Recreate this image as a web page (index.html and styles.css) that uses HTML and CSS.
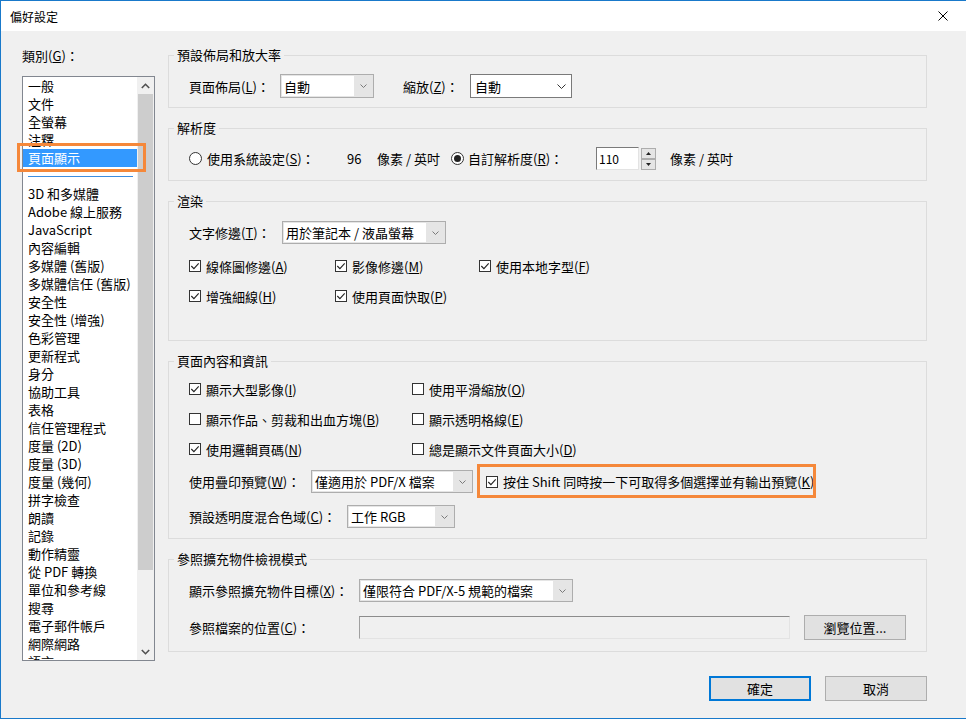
FILE: index.html
```html
<!DOCTYPE html>
<html>
  <head>
    <meta charset="utf-8">
    <title>偏好設定</title>
    <link rel="stylesheet" href="styles.css">
  </head>
  <body>
    <div class="window">
      <header class="titlebar">
        <span class="titlebar-text">偏好設定</span>
        <svg class="close-icon" width="10" height="10" viewBox="0 0 10 10">
          <path d="M0.5 0.5 L9.5 9.5 M9.5 0.5 L0.5 9.5" stroke="#000" stroke-width="1" fill="none"/>
        </svg>
      </header>

      <div class="dialog">
        <!-- category list -->
        <aside class="sidebar">
          <div class="cat-label">類別(<u>G</u>)：</div>
          <div class="listbox">
            <ul class="cat-list">
              <li>一般</li>
              <li>文件</li>
              <li>全螢幕</li>
              <li>注釋</li>
              <li class="selected">頁面顯示</li>
              <li class="separator"></li>
              <li>3D 和多媒體</li>
              <li>Adobe 線上服務</li>
              <li>JavaScript</li>
              <li>內容編輯</li>
              <li>多媒體 (舊版)</li>
              <li>多媒體信任 (舊版)</li>
              <li>安全性</li>
              <li>安全性 (增強)</li>
              <li>色彩管理</li>
              <li>更新程式</li>
              <li>身分</li>
              <li>協助工具</li>
              <li>表格</li>
              <li>信任管理程式</li>
              <li>度量 (2D)</li>
              <li>度量 (3D)</li>
              <li>度量 (幾何)</li>
              <li>拼字檢查</li>
              <li>朗讀</li>
              <li>記錄</li>
              <li>動作精靈</li>
              <li>從 PDF 轉換</li>
              <li>單位和參考線</li>
              <li>搜尋</li>
              <li>電子郵件帳戶</li>
              <li>網際網路</li>
              <li>語言</li>
            </ul>
            <div class="scrollbar">
              <div class="scroll-btn">
                <svg width="9" height="6" viewBox="0 0 9 6"><polyline points="0.8,5 4.5,1.3 8.2,5" fill="none" stroke="#505050" stroke-width="1.6"/></svg>
              </div>
              <div class="scroll-thumb"></div>
              <div class="scroll-track"></div>
              <div class="scroll-btn">
                <svg width="9" height="6" viewBox="0 0 9 6"><polyline points="0.8,1 4.5,4.7 8.2,1" fill="none" stroke="#505050" stroke-width="1.6"/></svg>
              </div>
            </div>
          </div>
          <div class="callout callout-list"></div>
        </aside>

        <main class="panel">
          <fieldset class="group">
            <legend>預設佈局和放大率</legend>
            <div class="group-body group-layout">
              <div class="row">
                <span class="field-label lbl-layout">頁面佈局(<u>L</u>)：</span>
                <div class="combo combo-layout">
                  <span class="combo-text">自動</span>
                  <span class="combo-arrow"><svg width="7" height="4" viewBox="0 0 7 4"><polyline points="0.5,0.5 3.5,3.5 6.5,0.5" fill="none" stroke="#7a7a7a"/></svg></span>
                </div>
                <span class="field-label lbl-zoom">縮放(<u>Z</u>)：</span>
                <div class="combo combo-edit combo-zoom">
                  <span class="combo-text">自動</span>
                  <span class="combo-arrow"><svg width="9" height="5" viewBox="0 0 9 5"><polyline points="0.5,0.5 4.5,4.5 8.5,0.5" fill="none" stroke="#333"/></svg></span>
                </div>
              </div>
            </div>
          </fieldset>

          <fieldset class="group">
            <legend>解析度</legend>
            <div class="group-body">
              <div class="row">
                <span class="radio"></span>
                <span class="field-label lbl-system">使用系統設定(<u>S</u>)：</span>
                <span class="dpi-value">96</span>
                <span class="unit">像素 / 英吋</span>
                <span class="radio on"></span>
                <span class="field-label lbl-custom">自訂解析度(<u>R</u>)：</span>
                <div class="spin-input">110</div>
                <div class="spinner">
                  <span class="spin-btn"><svg width="5" height="3" viewBox="0 0 5 3"><polygon points="0,3 2.5,0 5,3" fill="#222"/></svg></span>
                  <span class="spin-btn"><svg width="5" height="3" viewBox="0 0 5 3"><polygon points="0,0 2.5,3 5,0" fill="#222"/></svg></span>
                </div>
                <span class="unit-after">像素 / 英吋</span>
              </div>
            </div>
          </fieldset>

          <fieldset class="group">
            <legend>渲染</legend>
            <div class="group-body group-render">
              <div class="row">
                <span class="field-label lbl-smooth">文字修邊(<u>T</u>)：</span>
                <div class="combo combo-smooth">
                  <span class="combo-text">用於筆記本 / 液晶螢幕</span>
                  <span class="combo-arrow"><svg width="7" height="4" viewBox="0 0 7 4"><polyline points="0.5,0.5 3.5,3.5 6.5,0.5" fill="none" stroke="#7a7a7a"/></svg></span>
                </div>
              </div>
              <div class="check-grid render-grid">
                <span class="check"><span class="box"><svg width="10" height="10" viewBox="0 0 10 10"><polyline points="1.3,5 3.9,7.6 8.7,2.4" fill="none" stroke="#222" stroke-width="1.1"/></svg></span><span>線條圖修邊(<u>A</u>)</span></span>
                <span class="check"><span class="box"><svg width="10" height="10" viewBox="0 0 10 10"><polyline points="1.3,5 3.9,7.6 8.7,2.4" fill="none" stroke="#222" stroke-width="1.1"/></svg></span><span>影像修邊(<u>M</u>)</span></span>
                <span class="check"><span class="box"><svg width="10" height="10" viewBox="0 0 10 10"><polyline points="1.3,5 3.9,7.6 8.7,2.4" fill="none" stroke="#222" stroke-width="1.1"/></svg></span><span>使用本地字型(<u>F</u>)</span></span>
                <span class="check"><span class="box"><svg width="10" height="10" viewBox="0 0 10 10"><polyline points="1.3,5 3.9,7.6 8.7,2.4" fill="none" stroke="#222" stroke-width="1.1"/></svg></span><span>增強細線(<u>H</u>)</span></span>
                <span class="check"><span class="box"><svg width="10" height="10" viewBox="0 0 10 10"><polyline points="1.3,5 3.9,7.6 8.7,2.4" fill="none" stroke="#222" stroke-width="1.1"/></svg></span><span>使用頁面快取(<u>P</u>)</span></span>
              </div>
            </div>
          </fieldset>

          <fieldset class="group">
            <legend>頁面內容和資訊</legend>
            <div class="group-body">
              <div class="check-grid content-grid">
                <span class="check"><span class="box"><svg width="10" height="10" viewBox="0 0 10 10"><polyline points="1.3,5 3.9,7.6 8.7,2.4" fill="none" stroke="#222" stroke-width="1.1"/></svg></span><span>顯示大型影像(<u>I</u>)</span></span>
                <span class="check"><span class="box"></span><span>使用平滑縮放(<u>O</u>)</span></span>
                <span class="check"><span class="box"></span><span>顯示作品、剪裁和出血方塊(<u>B</u>)</span></span>
                <span class="check"><span class="box"></span><span>顯示透明格線(<u>E</u>)</span></span>
                <span class="check"><span class="box"><svg width="10" height="10" viewBox="0 0 10 10"><polyline points="1.3,5 3.9,7.6 8.7,2.4" fill="none" stroke="#222" stroke-width="1.1"/></svg></span><span>使用邏輯頁碼(<u>N</u>)</span></span>
                <span class="check"><span class="box"></span><span>總是顯示文件頁面大小(<u>D</u>)</span></span>
              </div>
              <div class="row">
                <span class="field-label lbl-overprint">使用疊印預覽(<u>W</u>)：</span>
                <div class="combo combo-overprint">
                  <span class="combo-text">僅適用於 PDF/X 檔案</span>
                  <span class="combo-arrow"><svg width="7" height="4" viewBox="0 0 7 4"><polyline points="0.5,0.5 3.5,3.5 6.5,0.5" fill="none" stroke="#7a7a7a"/></svg></span>
                </div>
                <span class="check check-callout"><span class="box"><svg width="10" height="10" viewBox="0 0 10 10"><polyline points="1.3,5 3.9,7.6 8.7,2.4" fill="none" stroke="#222" stroke-width="1.1"/></svg></span><span>按住 Shift 同時按一下可取得多個選擇並有輸出預覽(<u>K</u>)</span></span>
              </div>
              <div class="row">
                <span class="field-label lbl-blend">預設透明度混合色域(<u>C</u>)：</span>
                <div class="combo combo-blend">
                  <span class="combo-text">工作 RGB</span>
                  <span class="combo-arrow"><svg width="7" height="4" viewBox="0 0 7 4"><polyline points="0.5,0.5 3.5,3.5 6.5,0.5" fill="none" stroke="#7a7a7a"/></svg></span>
                </div>
              </div>
            </div>
          </fieldset>

          <fieldset class="group">
            <legend>參照擴充物件檢視模式</legend>
            <div class="group-body group-ref">
              <div class="row">
                <span class="field-label lbl-ref">顯示參照擴充物件目標(<u>X</u>)：</span>
                <div class="combo combo-ref">
                  <span class="combo-text">僅限符合 PDF/X-5 規範的檔案</span>
                  <span class="combo-arrow"><svg width="7" height="4" viewBox="0 0 7 4"><polyline points="0.5,0.5 3.5,3.5 6.5,0.5" fill="none" stroke="#7a7a7a"/></svg></span>
                </div>
              </div>
              <div class="row">
                <span class="field-label lbl-ref">參照檔案的位置(<u>C</u>)：</span>
                <div class="path-input"></div>
                <button class="btn btn-browse">瀏覽位置...</button>
              </div>
            </div>
          </fieldset>

          <div class="actions">
            <button class="btn btn-default">確定</button>
            <button class="btn">取消</button>
          </div>
        </main>
      </div>
    </div>
  </body>
</html>
```

FILE: styles.css
```css
body {
  margin: 0;
  background-color: #fff;
  font-family: "Noto Sans CJK TC", "Noto Sans", sans-serif;
  font-size: 13px;
  color: #000;
}

.window {
  width: 966px;
  height: 719px;
  box-sizing: border-box;
  border: 1px solid #1979ca;
  border-right: 0;
  background-color: #f0f0f0;
  display: flex;
  flex-direction: column;
}

.titlebar {
  height: 30px;
  flex: none;
  background-color: #fff;
  display: flex;
  align-items: center;
  justify-content: space-between;
  padding: 0 18px 0 9px;

  .titlebar-text {
    font-size: 12px;
  }
}

.dialog {
  flex: 1;
  display: flex;
  padding: 16px 0 0 21px;
}

/* left column */
.sidebar {
  width: 133px;
  flex: none;
  position: relative;

  .cat-label {
    line-height: 18px;
  }

  .listbox {
    margin-top: 11px;
    height: 585px;
    box-sizing: border-box;
    border: 1px solid #828790;
    background-color: #fff;
    display: flex;
    overflow: hidden;
  }

  .cat-list {
    flex: 1;
    margin: 0;
    padding: 0;
    list-style: none;

    li {
      height: 18px;
      line-height: 18px;
      padding-left: 5px;
      white-space: nowrap;
    }

    .selected {
      background-color: #3399ff;
      color: #fff;
    }

    .separator {
      display: flex;
      align-items: center;
      padding: 0 4px 0 5px;
    }

    .separator::before {
      content: "";
      flex: 1;
      height: 1px;
      background-color: #3d8ee0;
    }
  }

  .scrollbar {
    width: 17px;
    flex: none;
    display: flex;
    flex-direction: column;
    background-color: #f0f0f0;

    .scroll-btn {
      height: 17px;
      flex: none;
      display: flex;
      align-items: center;
      justify-content: center;
    }

    .scroll-thumb {
      height: 476px;
      flex: none;
      margin: 0 1px;
      background-color: #cdcdcd;
    }

    .scroll-track {
      flex: 1;
    }
  }
}

.callout {
  position: absolute;
  box-sizing: border-box;
  border: 3px solid #f5883a;
  pointer-events: none;
}

.callout-list {
  left: -5px;
  top: 96px;
  width: 129px;
  height: 29px;
}

/* right column */
.panel {
  width: 759px;
  margin-left: 13px;
  display: flex;
  flex-direction: column;
  gap: 12px;
}

.group {
  margin: 0;
  padding: 0;
  border: 1px solid #dcdcdc;
  min-width: 0;

  legend {
    margin-left: 5px;
    padding: 0 3px;
    line-height: 16px;
  }
}

.group-body {
  display: flex;
  flex-direction: column;
  gap: 12px;
  padding: 11px 0 10px 20px;
}

.group-layout {
  padding-bottom: 9px;

  .row {
    height: 24px;
  }
}

.group-render {
  gap: 13px;
  padding-top: 12px;
  padding-bottom: 35px;
}

.group-ref {
  gap: 14px;
  padding-top: 12px;
  padding-bottom: 12px;
}

.row {
  display: flex;
  align-items: center;
  height: 23px;
}

.field-label {
  flex: none;
  white-space: nowrap;
}

.lbl-layout { width: 91px; }
.lbl-zoom { width: 67px; margin-left: 29px; }
.lbl-system { width: 140px; margin-left: 5px; }
.lbl-custom { width: 128px; margin-left: 4px; }
.lbl-smooth { width: 93px; }
.lbl-overprint { width: 122px; }
.lbl-blend { width: 158px; }
.lbl-ref { width: 170px; }

.dpi-value { width: 30px; }
.unit { width: 74px; }
.unit-after { margin-left: 14px; }

/* drop-down lists */
.combo {
  display: flex;
  box-sizing: border-box;
  height: 100%;
  padding: 1px;
  border: 1px solid #adadad;
  background-color: #e5e5e5;

  .combo-text {
    flex: 1;
    display: flex;
    align-items: center;
    padding-left: 2px;
    background-color: #fff;
    white-space: nowrap;
    overflow: hidden;
  }

  .combo-arrow {
    width: 18px;
    flex: none;
    display: flex;
    align-items: center;
    justify-content: center;
  }
}

.combo-edit {
  padding: 0;
  border-color: #7a7a7a;
  background-color: #fff;

  .combo-text {
    padding-left: 4px;
  }

  .combo-arrow {
    width: 20px;
  }
}

.combo-layout { width: 94px; }
.combo-zoom { width: 102px; }
.combo-smooth { width: 164px; }
.combo-overprint { width: 162px; }
.combo-blend { width: 108px; }
.combo-ref { width: 214px; }

/* number field */
.spin-input {
  width: 43px;
  height: 23px;
  box-sizing: border-box;
  padding-left: 2px;
  border: 1px solid;
  border-color: #7a7a7a #e3e3e3 #e3e3e3 #7a7a7a;
  background-color: #fff;
  font-size: 12px;
  line-height: 21px;
}

.spinner {
  width: 15px;
  height: 22px;
  margin-left: 2px;
  display: flex;
  flex-direction: column;

  .spin-btn {
    flex: 1;
    display: flex;
    align-items: center;
    justify-content: center;
    border: 1px solid #adadad;
    background-color: #e5e5e5;
  }
}

/* radios and checkboxes */
.radio {
  width: 13px;
  height: 13px;
  flex: none;
  box-sizing: border-box;
  border: 1px solid #333;
  border-radius: 50%;
  background-color: #fff;
  display: flex;
  align-items: center;
  justify-content: center;
}

.radio.on::after {
  content: "";
  width: 7px;
  height: 7px;
  border-radius: 50%;
  background-color: #222;
}

.check-grid {
  display: grid;
  grid-auto-rows: 18px;
  row-gap: 12px;
}

.render-grid {
  grid-template-columns: 146px 144px auto;
}

.content-grid {
  grid-template-columns: 223px auto;
}

.check {
  display: inline-flex;
  align-items: center;
  gap: 5px;
  height: 18px;
  white-space: nowrap;

  .box {
    width: 12px;
    height: 12px;
    flex: none;
    box-sizing: border-box;
    border: 1px solid #333;
    background-color: #fff;
    display: flex;
  }
}

.check-callout {
  position: relative;
  margin-left: 13px;
}

.check-callout::after {
  content: "";
  position: absolute;
  left: -9px;
  top: -9px;
  width: 339px;
  height: 34px;
  box-sizing: border-box;
  border: 3px solid #f5883a;
}

/* file location */
.path-input {
  width: 431px;
  height: 23px;
  box-sizing: border-box;
  border: 1px solid;
  border-color: #8c8c8c #e3e3e3 #e3e3e3 #a0a0a0;
  background-color: #f0f0f0;
}

.btn {
  height: 25px;
  box-sizing: border-box;
  padding: 0;
  border: 1px solid #adadad;
  background-color: #e1e1e1;
  color: #000;
  font: inherit;
}

.btn-browse {
  width: 102px;
  margin-left: 14px;
}

.actions {
  display: flex;
  justify-content: flex-end;
  gap: 14px;
  margin-top: 12px;

  .btn {
    width: 102px;
  }

  .btn-default {
    border: 2px solid #0078d7;
  }
}
```
